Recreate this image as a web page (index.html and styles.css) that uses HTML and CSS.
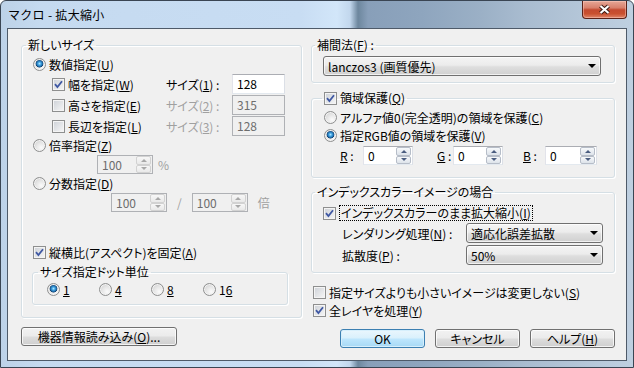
FILE: index.html
```html
<!DOCTYPE html>
<html lang="ja">
<head>
<meta charset="UTF-8">
<meta name="viewport" content="width=device-width, initial-scale=1.0">
<title>マクロ - 拡大縮小</title>
<link rel="stylesheet" href="styles.css">
</head>
<body>
<div class="window">
    <div class="titlebar">
        <span class="title">マクロ - 拡大縮小</span>
        <button class="close-btn" aria-label="閉じる">
            <svg width="13" height="11" viewBox="0 0 13 11">
                <path d="M2.5 2 L10.5 9 M10.5 2 L2.5 9" stroke="#3b1a14" stroke-width="4.2"/>
                <path d="M2.5 2 L10.5 9 M10.5 2 L2.5 9" stroke="#ffffff" stroke-width="2.2"/>
            </svg>
        </button>
    </div>
    <div class="client">
        <div class="col col-left">
            <fieldset class="group size-group">
                <legend>新しいサイズ</legend>
                <div class="row"><span class="radio on"></span>数値指定(<u>U</u>)</div>
                <div class="row field-row">
                    <span class="opt"><span class="check on"><svg width="9" height="9" viewBox="0 0 9 9"><path d="M1 4.2 L3.4 7 L8 1.2" fill="none" stroke="#3f58a3" stroke-width="1.8"/></svg></span>幅を指定(<u>W</u>)</span>
                    <span class="field-label">サイズ(<u>1</u>) :</span>
                    <span class="edit">128</span>
                </div>
                <div class="row field-row">
                    <span class="opt"><span class="check"></span>高さを指定(<u>E</u>)</span>
                    <span class="field-label off">サイズ(<u>2</u>) :</span>
                    <span class="edit off">315</span>
                </div>
                <div class="row field-row">
                    <span class="opt"><span class="check"></span>長辺を指定(<u>L</u>)</span>
                    <span class="field-label off">サイズ(<u>3</u>) :</span>
                    <span class="edit off">128</span>
                </div>
                <div class="row"><span class="radio"></span>倍率指定(<u>Z</u>)</div>
                <div class="row spin-row ratio-row">
                    <span class="spin off"><span class="spin-val">100</span><span class="spin-btns"><i class="up"></i><i class="down"></i></span></span>
                    <span class="off-text">%</span>
                </div>
                <div class="row"><span class="radio"></span>分数指定(<u>D</u>)</div>
                <div class="row spin-row frac-row">
                    <span class="spin off"><span class="spin-val">100</span><span class="spin-btns"><i class="up"></i><i class="down"></i></span></span>
                    <span class="off-text">/</span>
                    <span class="spin off"><span class="spin-val">100</span><span class="spin-btns"><i class="up"></i><i class="down"></i></span></span>
                    <span class="off-text">倍</span>
                </div>
                <div class="row aspect-row"><span class="check on"><svg width="9" height="9" viewBox="0 0 9 9"><path d="M1 4.2 L3.4 7 L8 1.2" fill="none" stroke="#3f58a3" stroke-width="1.8"/></svg></span>縦横比(アスペクト)を固定(<u>A</u>)</div>
                <fieldset class="group dot-group">
                    <legend>サイズ指定ドット単位</legend>
                    <div class="dot-row">
                        <span class="dot-opt"><span class="radio on"></span><u>1</u></span>
                        <span class="dot-opt"><span class="radio"></span><u>4</u></span>
                        <span class="dot-opt"><span class="radio"></span><u>8</u></span>
                        <span class="dot-opt"><span class="radio"></span>1<u>6</u></span>
                    </div>
                </fieldset>
            </fieldset>
            <button class="btn load-btn">機器情報読み込み(<u>O</u>)...</button>
        </div>

        <div class="col col-right">
            <fieldset class="group interp-group">
                <legend>補間法(<u>F</u>) :</legend>
                <div class="combo"><span class="combo-text">lanczos3 (画質優先)</span><i class="arrow"></i></div>
            </fieldset>
            <fieldset class="group protect-group">
                <legend class="check-legend"><span class="check on"><svg width="9" height="9" viewBox="0 0 9 9"><path d="M1 4.2 L3.4 7 L8 1.2" fill="none" stroke="#3f58a3" stroke-width="1.8"/></svg></span>領域保護(<u>Q</u>)</legend>
                <div class="row"><span class="radio"></span>アルファ値0(完全透明)の領域を保護(<u>C</u>)</div>
                <div class="row"><span class="radio on"></span>指定RGB値の領域を保護(<u>V</u>)</div>
                <div class="rgb-row">
                    <span class="rgb-lbl r"><u>R</u> :</span>
                    <span class="spin rgb-spin"><span class="spin-val">0</span><span class="spin-btns"><i class="up"></i><i class="down"></i></span></span>
                    <span class="rgb-lbl g"><u>G</u> :</span>
                    <span class="spin rgb-spin"><span class="spin-val">0</span><span class="spin-btns"><i class="up"></i><i class="down"></i></span></span>
                    <span class="rgb-lbl b"><u>B</u> :</span>
                    <span class="spin rgb-spin wide"><span class="spin-val">0</span><span class="spin-btns"><i class="up"></i><i class="down"></i></span></span>
                </div>
            </fieldset>
            <fieldset class="group index-group">
                <legend>インデックスカラーイメージの場合</legend>
                <div class="row"><span class="check on"><svg width="9" height="9" viewBox="0 0 9 9"><path d="M1 4.2 L3.4 7 L8 1.2" fill="none" stroke="#3f58a3" stroke-width="1.8"/></svg></span><span class="focus">インデックスカラーのまま拡大縮小(<u>I</u>)</span></div>
                <div class="combo-row">
                    <span class="combo-label">レンダリング処理(<u>N</u>) :</span>
                    <div class="combo"><span class="combo-text">適応化誤差拡散</span><i class="arrow"></i></div>
                </div>
                <div class="combo-row">
                    <span class="combo-label">拡散度(<u>P</u>) :</span>
                    <div class="combo"><span class="combo-text">50%</span><i class="arrow"></i></div>
                </div>
            </fieldset>
            <div class="row plain-row"><span class="check"></span>指定サイズよりも小さいイメージは変更しない(<u>S</u>)</div>
            <div class="row plain-row"><span class="check on"><svg width="9" height="9" viewBox="0 0 9 9"><path d="M1 4.2 L3.4 7 L8 1.2" fill="none" stroke="#3f58a3" stroke-width="1.8"/></svg></span>全レイヤを処理(<u>Y</u>)</div>
            <div class="btn-row">
                <button class="btn default">OK</button>
                <button class="btn">キャンセル</button>
                <button class="btn">ヘルプ(<u>H</u>)</button>
            </div>
        </div>
    </div>
</div>
</body>
</html>
```

FILE: styles.css
```css
* {
    box-sizing: border-box;
}
body {
    margin: 0;
    width: 634px;
    height: 368px;
    overflow: hidden;
    font-family: "Noto Sans CJK JP", "Noto Sans", sans-serif;
    font-size: 12px;
    font-feature-settings: "palt";
    color: #000000;
    background: #ffffff;
}
u {
    text-underline-offset: 1px;
}
.window {
    height: 368px;
    display: flex;
    flex-direction: column;
    padding: 0 6px 6px 6px;
    border: 1px solid #3a4553;
    border-radius: 6px 6px 0 0;
    background: linear-gradient(90deg, #bdd2e8 0, #c5daf0 40px, #c8ddf3 300px, #d2e6f9 336px, #c2d7ed 349px, #6d879e 357px, #889fb9 367px, #8ea5be 420px, #9bb0c6 480px, #a9bcd0 525px, #b4c6d8 580px, #bfd0e1 634px);
}
.titlebar {
    height: 27px;
    display: flex;
    align-items: center;
    padding-left: 1px;
}
.title {
    flex: 1;
    line-height: 14px;
    font-feature-settings: normal;
    letter-spacing: 0.3px;
}
.close-btn {
    align-self: flex-start;
    width: 45px;
    height: 18px;
    padding: 0;
    display: flex;
    align-items: center;
    justify-content: center;
    border: 1px solid #5b2219;
    border-top: none;
    border-radius: 0 0 4px 4px;
    background: linear-gradient(#e6a797 0, #d8806c 40%, #c44a30 52%, #c9502f 75%, #e0866a 100%);
    box-shadow: inset 0 0 0 1px rgba(255, 210, 200, 0.45);
}
.client {
    flex: 1;
    display: flex;
    gap: 9px;
    padding: 9px 11px 0 13px;
    border: 1px solid #4e5a69;
    background: #f0f0f0;
}
.col {
    display: flex;
    flex-direction: column;
}
.col-left {
    width: 281px;
}
.col-right {
    width: 304px;
}

/* group boxes */
.group {
    margin: 0;
    min-width: 0;
    border: 1px solid #d5dfe5;
    border-radius: 3px;
    box-shadow: inset 1px 1px 0 #ffffff, 1px 1px 0 #ffffff;
}
.group legend {
    padding: 0 2px;
    line-height: 14px;
    height: 14px;
}
.size-group {
    padding: 3px 13px 12px 11px;
}
.size-group > legend {
    margin-left: -7px;
}
.dot-group {
    margin: 4px 0 0 -1px;
    padding: 1px 0 6px 14px;
}
.dot-group legend {
    margin-left: -9px;
}
.interp-group {
    padding: 4px 13px 6px 11px;
}
.interp-group legend {
    margin-left: -8px;
}
.protect-group {
    margin-top: 8px;
    padding: 3px 13px 12px 12px;
}
.check-legend {
    display: flex;
    align-items: center;
    margin-left: -2px;
}
.index-group {
    margin-top: 7px;
    padding: 5px 11px 7px 11px;
}
.index-group legend {
    margin-left: -8px;
}

/* rows */
.row {
    display: flex;
    align-items: center;
    height: 18px;
    white-space: nowrap;
}
.field-row {
    height: 20px;
    margin-top: 3px;
}
.row + .field-row {
    margin-top: 1px;
}
.opt {
    display: flex;
    align-items: center;
    width: 133px;
    padding-left: 19px;
}
.field-label {
    width: 66px;
}
.off,
.off-text {
    color: #a0a0a0;
}
.spin-row {
    height: 19px;
    margin-top: 1px;
    gap: 10px;
}
.ratio-row {
    padding-left: 64px;
    gap: 5px;
}
.frac-row {
    padding-left: 78px;
}
.aspect-row {
    margin-top: 31px;
}
.dot-row {
    display: flex;
    height: 18px;
}
.dot-opt {
    display: flex;
    align-items: center;
    width: 52px;
}
.plain-row {
    padding-left: 2px;
}
.index-group + .plain-row {
    margin-top: 10px;
}

/* check boxes and radios */
.check {
    flex: none;
    width: 13px;
    height: 13px;
    margin-right: 3px;
    display: inline-flex;
    align-items: center;
    justify-content: center;
    border: 1px solid #8e8f8f;
    background: linear-gradient(135deg, #cdd1d7, #f7f7f7);
    box-shadow: inset 0 0 0 1px #f4f4f4;
}
.radio {
    flex: none;
    width: 13px;
    height: 13px;
    margin-right: 3px;
    border: 1px solid #8e8f8f;
    border-radius: 50%;
    background: radial-gradient(circle at 65% 70%, #fbfbfb 0, #e4e4e4 50%, #c6c6c6 100%);
    box-shadow: inset 0 0 0 1px #f3f3f3;
}
.radio.on {
    background:
        radial-gradient(circle at 50% 42%, #b4ecff 0, #45a6e6 1.5px, #1d6aa6 3px, #163f6c 3.6px, rgba(22, 63, 108, 0) 4.2px),
        radial-gradient(circle at 65% 70%, #fbfbfb 0, #e4e4e4 50%, #c6c6c6 100%);
}
.focus {
    padding: 0 1px;
    line-height: 14px;
    border: 1px dotted #000000;
}

/* edit boxes */
.edit {
    width: 53px;
    height: 20px;
    padding-left: 4px;
    line-height: 18px;
    border: 1px solid;
    border-color: #abadb3 #dbdfe6 #e3e9ef #e2e3ea;
    background: #ffffff;
}
.edit.off {
    color: #6d6d6d;
    border-color: #afb1b5;
    background: #f0f0f0;
}
.spin {
    display: flex;
    width: 56px;
    height: 19px;
    border: 1px solid;
    border-color: #abadb3 #dbdfe6 #e3e9ef #e2e3ea;
    background: #ffffff;
}
.spin.off {
    color: #6d6d6d;
    border-color: #afb1b5;
    background: #f0f0f0;
}
.spin-val {
    flex: 1;
    padding-left: 4px;
    line-height: 17px;
}
.spin-btns {
    display: flex;
    flex-direction: column;
    width: 15px;
    margin-right: 1px;
}
.spin-btns i {
    flex: 1;
    display: flex;
    align-items: center;
    justify-content: center;
    border: 1px solid #b6bdc8;
    border-radius: 2px;
    background: linear-gradient(#f7f9fb, #dde3ea);
}
.spin-btns i::before {
    content: "";
    border: 3px solid transparent;
}
.spin-btns .up::before {
    border-top-width: 0;
    border-bottom-color: #4a5d80;
}
.spin-btns .down::before {
    border-bottom-width: 0;
    border-top-color: #4a5d80;
}
.spin.off .spin-btns i {
    border-color: #d2d2d2;
    background: linear-gradient(#f7f7f7, #e9e9e9);
}
.spin.off .up::before {
    border-bottom-color: #a8a8a8;
}
.spin.off .down::before {
    border-top-color: #a8a8a8;
}
.rgb-row {
    display: flex;
    align-items: center;
    height: 19px;
    margin-top: 2px;
    padding-left: 16px;
}
.rgb-lbl {
    width: 23px;
}
.rgb-lbl.g {
    width: 16px;
    margin-left: 24px;
}
.rgb-lbl.b {
    width: 22px;
    margin-left: 20px;
}
.rgb-spin {
    width: 50px;
}
.rgb-spin.wide {
    width: 52px;
}

/* combo boxes */
.combo {
    flex: 1;
    display: flex;
    align-items: center;
    height: 20px;
    padding: 0 4px 0 4px;
    border: 1px solid #707070;
    border-radius: 3px;
    background: linear-gradient(#f4f4f4 0, #ececec 45%, #dedede 55%, #d0d0d0 100%);
    box-shadow: inset 0 0 0 1px rgba(255, 255, 255, 0.7);
}
.combo-text {
    flex: 1;
}
.arrow {
    width: 0;
    height: 0;
    border: 4px solid transparent;
    border-bottom: 0;
    border-top-color: #000000;
}
.combo-row {
    display: flex;
    align-items: center;
    height: 20px;
    margin-top: 2px;
    padding-left: 19px;
}
.row + .combo-row {
    margin-top: 1px;
}
.combo-label {
    width: 124px;
}

/* buttons */
.btn {
    height: 19px;
    padding: 0;
    font: inherit;
    font-feature-settings: "palt";
    color: #000000;
    border: 1px solid #707070;
    border-radius: 3px;
    background: linear-gradient(#f2f2f2 0, #ebebeb 48%, #dddddd 52%, #cfcfcf 100%);
    box-shadow: inset 0 0 0 1px rgba(255, 255, 255, 0.75);
}
.btn.default {
    border-color: #3c7fb1;
    background: linear-gradient(#eaf6fd 0, #d9f0fc 48%, #bee6fd 52%, #a7d9f5 100%);
    box-shadow: inset 0 0 0 1px #d6effc;
}
.load-btn {
    width: 156px;
    margin-top: 9px;
}
.btn-row {
    display: flex;
    justify-content: flex-end;
    gap: 10px;
    margin-top: 10px;
}
.btn-row .btn {
    width: 85px;
}
```
